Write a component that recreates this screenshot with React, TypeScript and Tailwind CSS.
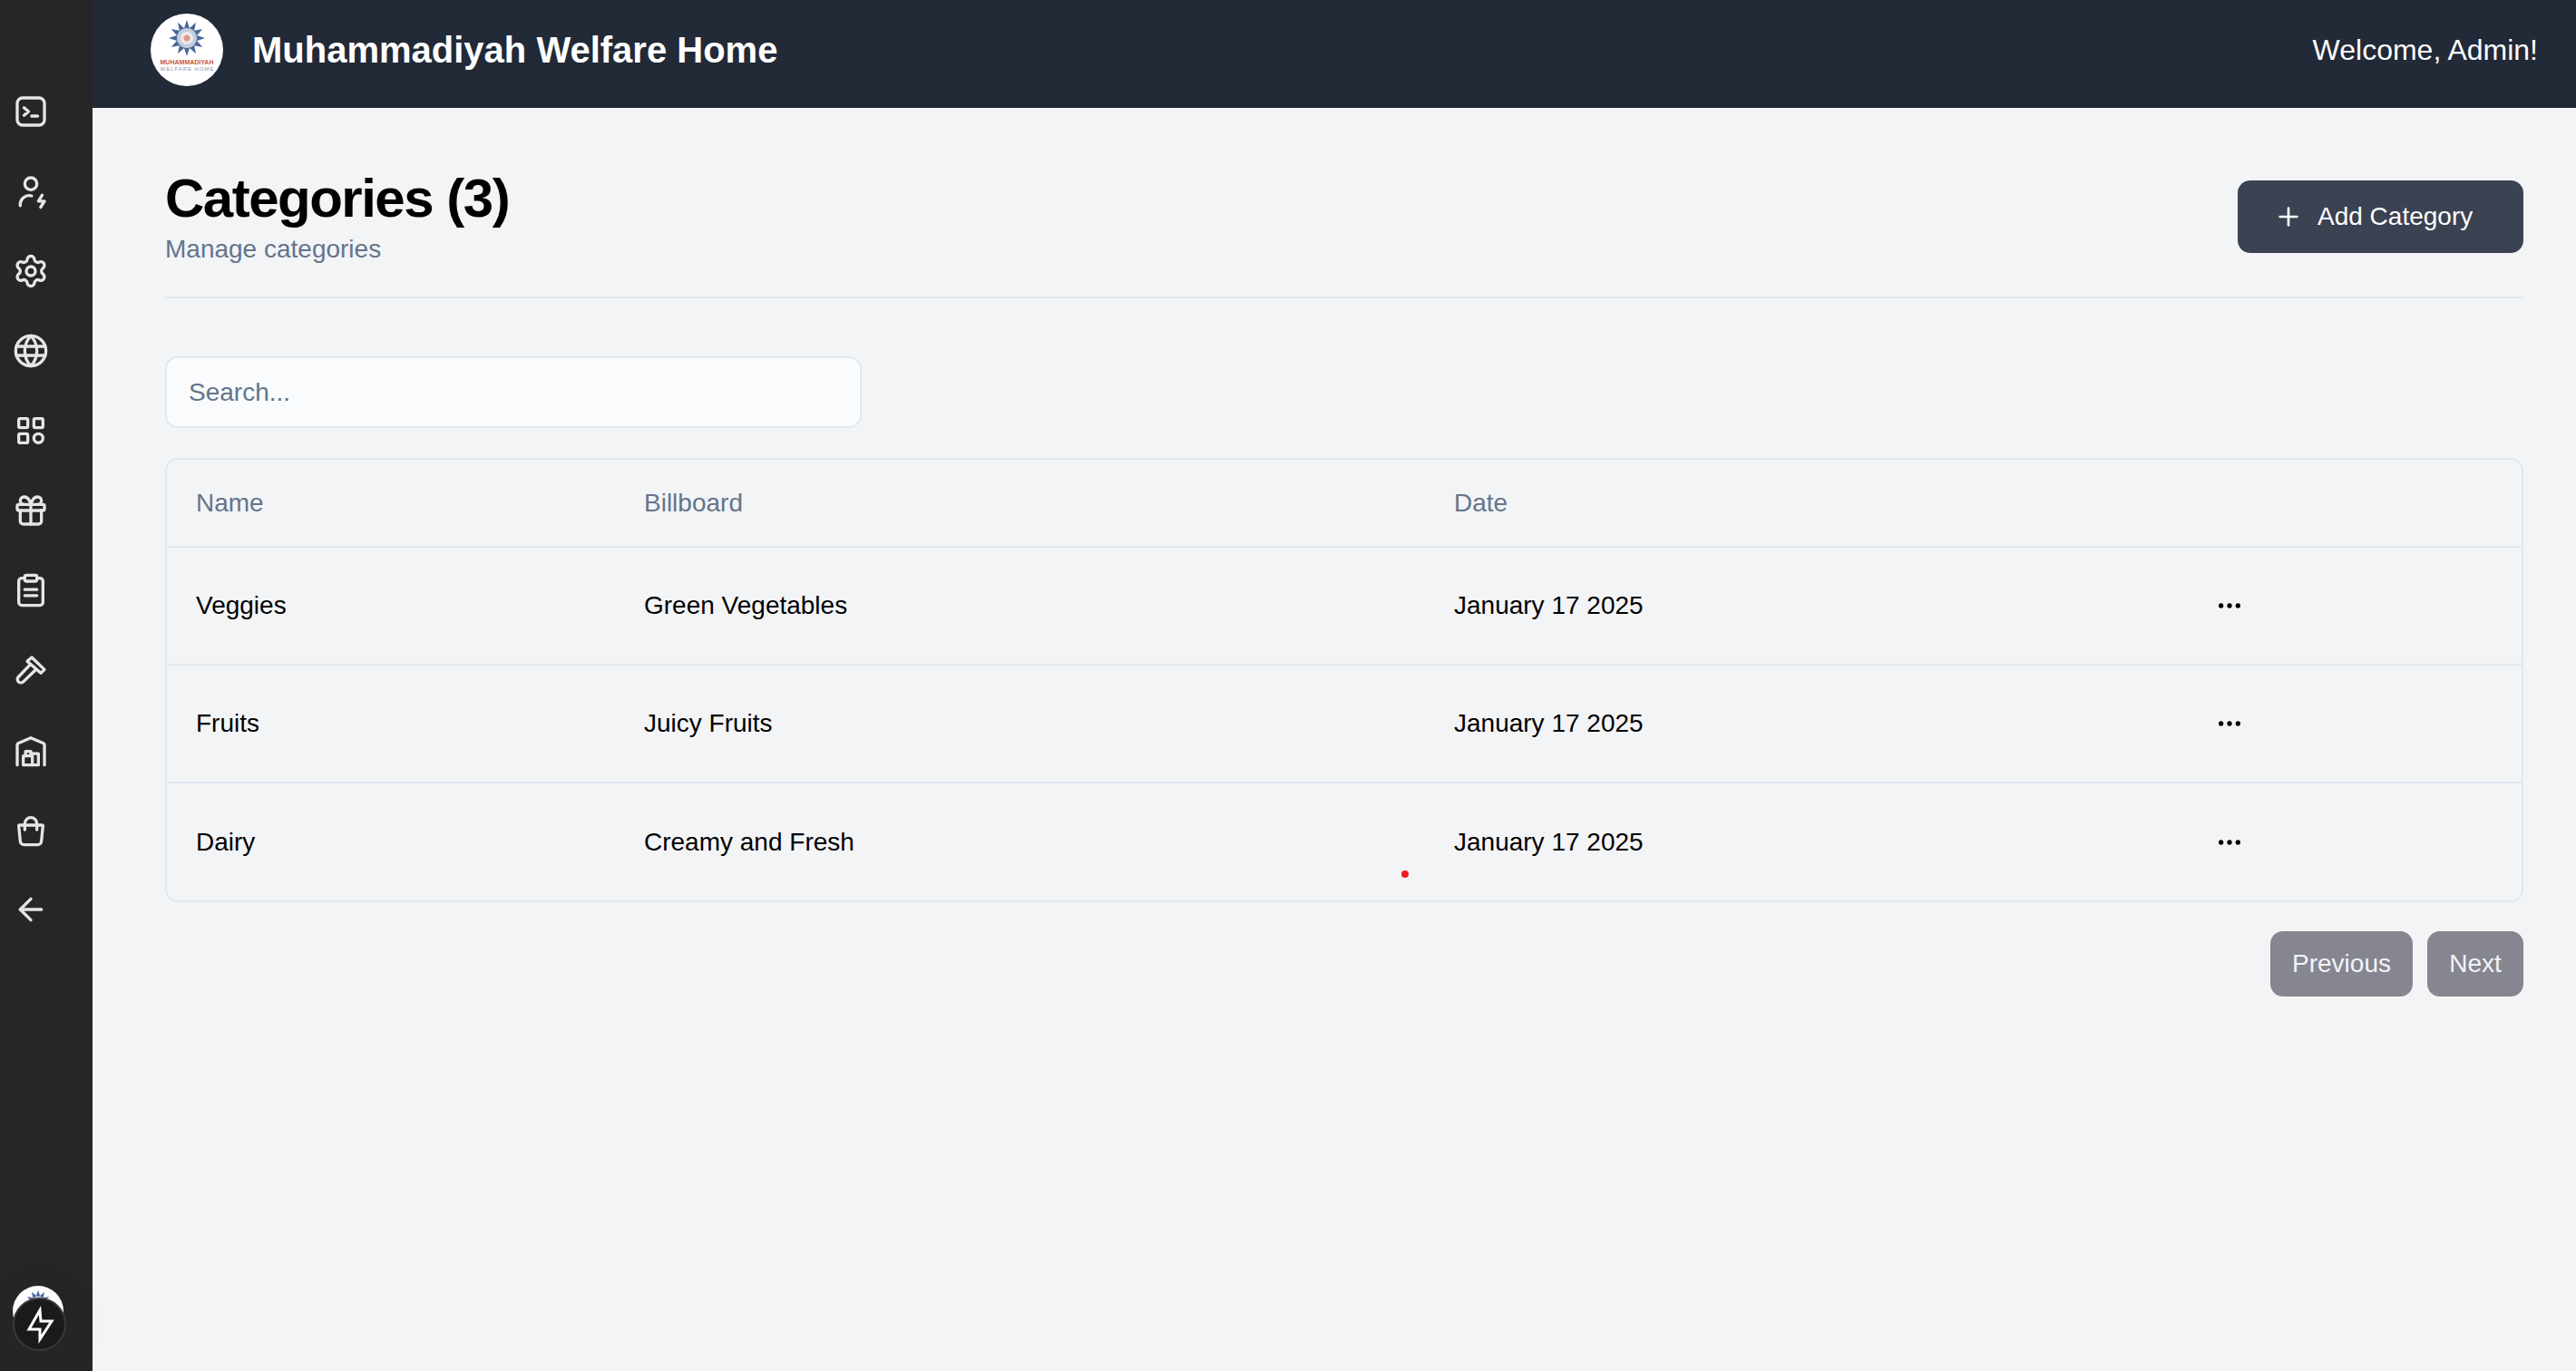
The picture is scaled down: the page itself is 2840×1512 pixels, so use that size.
import { ArrowLeft, Ellipsis, Gift, Plus, Settings } from "lucide-react"

const starPoints = Array.from({ length: 24 }, (_, i) => {
  const r = i % 2 === 0 ? 20 : 11.5
  const a = (i * Math.PI) / 12 - Math.PI / 2
  return `${40 + r * Math.cos(a)},${27 + r * Math.sin(a)}`
}).join(" ")

function Logo({ className }: { className: string }) {
  return (
    <svg viewBox="0 0 80 80" className={className}>
      <circle cx="40" cy="40" r="40" fill="#ffffff" />
      <polygon points={starPoints} fill="#4a6799" />
      <circle cx="40" cy="27" r="11" fill="#c3cde0" />
      <circle cx="40" cy="27" r="7" fill="#eceaee" />
      <circle cx="40" cy="27" r="3.5" fill="#e09a8c" />
      <text x="40" y="56" textAnchor="middle" textLength="59" lengthAdjust="spacingAndGlyphs" fontSize="7" fontWeight="700" fontFamily="'Liberation Sans', sans-serif" fill="#c9583f">
        MUHAMMADIYAH
      </text>
      <text x="40" y="62.5" textAnchor="middle" textLength="59" fontSize="6" fontFamily="'Liberation Sans', sans-serif" fill="#8d93ad">
        WELFARE HOME
      </text>
    </svg>
  )
}

function SvgIcon({ children }: { children: React.ReactNode }) {
  return (
    <svg viewBox="0 0 24 24" fill="none" stroke="currentColor" strokeWidth="2" strokeLinecap="round" strokeLinejoin="round" className="w-10 h-10">
      {children}
    </svg>
  )
}

const sidebarIcons = [
  <SvgIcon key="terminal">
    <rect x="3" y="3" width="18" height="18" rx="3.500" />
    <path d="m7.500 9.500 3 2.500-3 2.500M12.500 15h4" />
  </SvgIcon>,
  <SvgIcon key="user">
    <circle cx="12" cy="7" r="4" />
    <path d="M5 21.500v-1.500a6 6 0 0 1 7.500-5" />
    <path d="M19.500 14.500 17 18.500h4l-2.500 4" />
  </SvgIcon>,
  <Settings key="settings" className="w-10 h-10" />,
  <SvgIcon key="globe">
    <circle cx="12" cy="12" r="10" />
    <path d="M12 2c2.700 2.800 4 6.100 4 10s-1.300 7.200-4 10c-2.700-2.800-4-6.100-4-10s1.300-7.200 4-10z" />
    <path d="M2.500 9h19M2.500 15h19" />
  </SvgIcon>,
  <SvgIcon key="grid">
    <rect x="4" y="4" width="6" height="6" rx="1" />
    <rect x="14" y="4" width="6" height="6" rx="1" />
    <rect x="4" y="14" width="6" height="6" rx="1" />
    <circle cx="17" cy="17" r="3" />
  </SvgIcon>,
  <Gift key="gift" className="w-10 h-10" />,
  <SvgIcon key="clipboard">
    <rect x="8" y="2" width="8" height="4" rx="1" />
    <path d="M16 4h2a2 2 0 0 1 2 2v14a2 2 0 0 1-2 2H6a2 2 0 0 1-2-2V6a2 2 0 0 1 2-2h2" />
    <path d="M8 11.500h8M8 15.500h8" />
  </SvgIcon>,
  <SvgIcon key="hammer">
    <path d="M12.600 3.600 21 11.600l-2.400 2.400-9-7.800z" />
    <path d="M11.500 8.500 3.800 16.500a2.200 2.200 0 0 0 3.200 3.200L15 12" />
  </SvgIcon>,
  <SvgIcon key="warehouse">
    <path d="M3 22V8.500a1 1 0 0 1 .6-.9L12 4l8.400 3.600a1 1 0 0 1 .6.900V22" />
    <rect x="7" y="16" width="6" height="6" />
    <path d="M8.500 16v-3h3.500v3M13 14.500h4V22h-4" />
  </SvgIcon>,
  <SvgIcon key="bag">
    <path d="M4 9.500a.5.5 0 0 1 .5-.5h15a.5.5 0 0 1 .5.500l-1 10a2.500 2.500 0 0 1-2.500 2.500h-9A2.500 2.500 0 0 1 5 19.500z" />
    <path d="M8 12V8a4 4 0 0 1 8 0v4" />
  </SvgIcon>,
  <ArrowLeft key="back" className="w-10 h-10" />,
]

const categories = [
  { name: "Veggies", billboard: "Green Vegetables", date: "January 17 2025" },
  { name: "Fruits", billboard: "Juicy Fruits", date: "January 17 2025" },
  { name: "Dairy", billboard: "Creamy and Fresh", date: "January 17 2025" },
]

export default function App() {
  return (
    <div className="relative flex h-[1512px] overflow-hidden bg-[#f3f4f6] text-black font-['Liberation_Sans',Arial,sans-serif]">
      <aside className="flex flex-col w-[102px] shrink-0 bg-[#262626] text-[#e5e5e5]">
        <nav className="flex flex-col gap-12 pl-[14px] pt-[103px]">
          {sidebarIcons}
        </nav>
        <Logo className="mt-auto mb-[38px] ml-[14px] w-14 h-14" />
      </aside>

      <div className="flex flex-col flex-1 min-w-0">
        <header className="flex justify-between h-[119px] pl-16 pr-[42px] pt-[15px] bg-[#222937] text-white">
          <div className="flex items-center gap-8 h-20">
            <Logo className="w-20 h-20" />
            <span className="text-[40px] font-bold">Muhammadiyah Welfare Home</span>
          </div>
          <span className="flex items-center h-20 text-[32px]">Welcome, Admin!</span>
        </header>

        <main className="pl-20 pr-[58px] pt-16">
          <div className="flex justify-between border-b-2 border-[#e2e8f0] h-[146px]">
            <div>
              <h1 className="text-[60px] leading-[72px] font-bold tracking-[-1.5px]">Categories (3)</h1>
              <p className="text-[28px] leading-[40px] text-[#64748b]">Manage categories</p>
            </div>
            <button className="flex items-center gap-4 w-[315px] h-20 mt-4 pl-10 rounded-[14px] bg-[#3b4252] text-white text-[28px]">
              <Plus className="w-8 h-8" />
              Add Category
            </button>
          </div>

          <input
            placeholder="Search..."
            className="block w-[768px] h-[79px] mt-16 px-6 rounded-[14px] border-2 border-[#e2e8f0] bg-[#fafbfc] text-[28px] placeholder:text-[#64748b]"
          />

          <div className="mt-[33px] rounded-[14px] border-2 border-[#e2e8f0] overflow-hidden">
            <table className="w-full table-fixed text-[28px] text-left">
              <colgroup>
                <col className="w-[492px]" />
                <col className="w-[893px]" />
                <col className="w-[839px]" />
                <col />
              </colgroup>
              <thead>
                <tr className="h-[96px] border-b-2 border-[#e2e8f0] text-[#64748b]">
                  <th className="px-[32px] font-normal">Name</th>
                  <th className="px-[34px] font-normal">Billboard</th>
                  <th className="px-[34px] font-normal">Date</th>
                  <th />
                </tr>
              </thead>
              <tbody>
                {categories.map((category, index) => (
                  <tr key={index} className={`h-[130px] ${index < 2 ? "border-b-2 border-[#e2e8f0]" : ""}`}>
                    <td className="px-[32px]">{category.name}</td>
                    <td className="px-[34px]">{category.billboard}</td>
                    <td className="px-[34px]">{category.date}</td>
                    <td className="px-[34px]">
                      <Ellipsis className="w-8 h-8" />
                    </td>
                  </tr>
                ))}
              </tbody>
            </table>
          </div>

          <div className="flex justify-end gap-4 mt-[32px]">
            <button className="w-[157px] h-[72px] rounded-[14px] bg-[#858690] text-[#f3f4f6] text-[28px]">Previous</button>
            <button className="w-[106px] h-[72px] rounded-[14px] bg-[#858690] text-[#f3f4f6] text-[28px]">Next</button>
          </div>
        </main>
      </div>

      {/* dev badge over the sidebar logo */}
      <div className="absolute left-[14px] top-[1431px] flex items-center justify-center w-[59px] h-[59px] rounded-full border-2 border-[#3a3a3a] bg-[#1a1a1c] shadow-[0_0_80px_rgba(0,0,0,0.06)]">
        <svg viewBox="0 0 58 58" className="w-[58px] h-[58px] shrink-0" fill="none" stroke="#ffffff" strokeWidth="3">
          <polygon points="29,13 17,34 29,34 29,45 42,25 30,25" />
        </svg>
      </div>

      {/* red cursor dot */}
      <div className="absolute left-[1545px] top-[960px] w-2 h-2 rounded-full bg-[#ee1c25]" />
    </div>
  )
}
